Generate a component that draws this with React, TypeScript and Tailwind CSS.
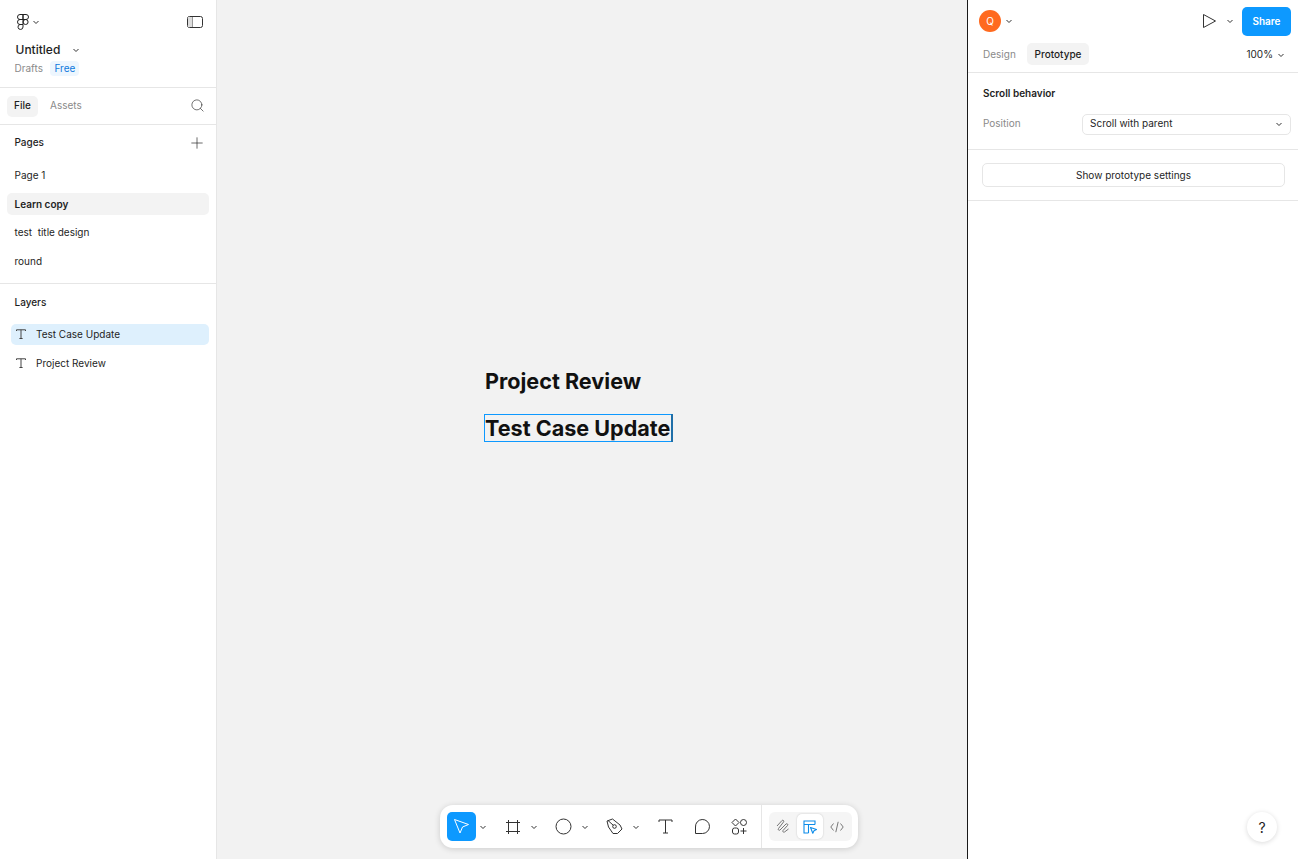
import { Plus, Search } from "lucide-react";

function Caret({ className = "text-[#333]" }: { className?: string }) {
  return (
    <svg width="8" height="8" viewBox="0 0 8 8" fill="none" className={className}>
      <path d="M1.5 3l2.5 2.5L6.5 3" stroke="currentColor" strokeWidth="1" />
    </svg>
  );
}

function FigmaLogo() {
  return (
    <svg width="12" height="16" viewBox="0 0 12 16" fill="none" stroke="#222" strokeWidth="1">
      <path d="M6 .5H3a2.5 2.5 0 0 0 0 5h3zM6 .5h3a2.5 2.5 0 0 1 0 5H6zM6 5.5H3a2.5 2.5 0 0 0 0 5h3z" />
      <circle cx="8.6" cy="8" r="2.5" />
      <path d="M6 10.5H3a2.5 2.5 0 1 0 3 2.5z" />
    </svg>
  );
}

function TextIcon() {
  return (
    <svg width="10" height="10" viewBox="0 0 10 10" fill="none" stroke="#444" strokeWidth="1" className="mb-[2px]">
      <path d="M.5 2V.8h9V2M5 .8v8.7M3.400 9.500h3.200" />
    </svg>
  );
}

function PageRow({ label, className = "" }: { label: string; className?: string }) {
  return (
    <div className={`mx-[7px] flex h-[22px] w-[202px] items-center rounded-[5px] px-[7.5px] ${className}`}>
      <span className="whitespace-pre">{label}</span>
    </div>
  );
}

function LayerRow({ label, active }: { label: string; active?: boolean }) {
  return (
    <div
      className={`ml-[11px] flex h-[21px] w-[198px] items-center gap-[10px] rounded-[5px] pl-[5px] ${
        active ? "bg-[#def0fd]" : ""
      }`}
    >
      <TextIcon />
      <span>{label}</span>
    </div>
  );
}

function LeftPanel() {
  return (
    <aside className="flex h-full w-[217px] shrink-0 flex-col border-r border-[#e6e6e6] bg-white">
      <div className="h-[88px] shrink-0 border-b border-[#e6e6e6] pl-[14.5px] pr-[13px] pt-[13px]">
        <div className="flex h-[17px] items-center justify-between">
          <div className="flex items-center gap-[3px] pl-[2px]">
            <FigmaLogo />
            <Caret />
          </div>
          <svg width="16" height="12" viewBox="0 0 16 12" fill="none" stroke="#333" strokeWidth="1">
            <rect x=".5" y=".5" width="15" height="11" rx="2" />
            <path d="M5 .5v11" />
            <path d="M1 1h4v10H1z" fill="#ddd" stroke="none" />
          </svg>
        </div>
        <div className="mt-[12px] flex h-[16px] items-center text-[12px] font-medium leading-[16px] text-[#1e1e1e]">
          <span className="w-[57px] pl-[1px]">Untitled</span>
          <Caret />
        </div>
        <div className="mt-[2px] flex h-[17px] items-center">
          <span className="text-[#8a8a8a]">Drafts</span>
          <span className="ml-[7.5px] flex h-[15px] items-center rounded-[4px] bg-[#edf6fe] px-[4px] text-[#0d79dd]">
            Free
          </span>
        </div>
      </div>
      <div className="flex h-[37px] shrink-0 items-center border-b border-[#e6e6e6] pl-[7px] pr-[11px]">
        <span className="flex h-[21px] w-[31px] items-center justify-center rounded-[5px] bg-[#f3f3f3] pb-px font-medium">
          File
        </span>
        <span className="ml-[12px] pb-[2px] text-[#8a8a8a]">Assets</span>
        <Search size={15} strokeWidth={1.1} className="mb-px ml-auto text-[#333]" />
      </div>
      <div className="h-[159px] shrink-0 border-b border-[#e6e6e6]">
        <div className="flex h-[36px] items-center justify-between pb-px pl-[14.5px] pr-[10px] font-medium">
          <span className="pb-px">Pages</span>
          <Plus size={18} strokeWidth={0.9} className="text-[#222]" />
        </div>
        <div className="mt-[3.5px] flex flex-col gap-[6.5px]">
          <PageRow label="Page 1" />
          <PageRow label="Learn copy" className="bg-[#f3f3f3] font-semibold" />
          <PageRow label="test  title design" className="-mt-[0.5px] mb-[0.5px]" />
          <PageRow label="round" />
        </div>
      </div>
      <div className="flex h-[37px] shrink-0 items-center pl-[14.5px] font-medium">Layers</div>
      <div className="mt-[3px] flex flex-col gap-[8px]">
        <LayerRow label="Test Case Update" active />
        <LayerRow label="Project Review" />
      </div>
    </aside>
  );
}

function ToolSlot({ children, caret }: { children: React.ReactNode; caret?: boolean }) {
  return (
    <div className="flex h-[29px] items-center gap-[3px]">
      <div className="flex h-[29px] w-[29px] items-center justify-center">{children}</div>
      {caret && <Caret />}
    </div>
  );
}

function Toolbar() {
  return (
    <div className="absolute bottom-[11px] left-[223px] flex h-[43px] w-[418px] items-center rounded-[13px] bg-white pl-[7px] shadow-[0_1px_6px_rgba(0,0,0,0.16)]">
      <div className="flex h-[29px] items-center gap-[3px]">
        <div className="flex h-[29px] w-[29px] items-center justify-center rounded-[5px] bg-[#0d99ff]">
          <svg width="17" height="17" viewBox="0 0 17 17" fill="none" stroke="white" strokeWidth="1">
            <path d="M1.500 1.500l14 5-6 2.500-2.500 6z" strokeLinejoin="round" />
          </svg>
        </div>
        <Caret />
      </div>
      <div className="ml-[11px] flex items-center gap-[11px]">
        <ToolSlot caret>
          <svg width="16" height="16" viewBox="0 0 16 16" fill="none" stroke="#333" strokeWidth="1">
            <path d="M3.500 1v14M12.500 1v14M1 3.500h14M1 12.500h14" />
          </svg>
        </ToolSlot>
        <ToolSlot caret>
          <svg width="17" height="17" viewBox="0 0 17 17" fill="none" stroke="#333" strokeWidth="1">
            <circle cx="8.500" cy="8.500" r="7.500" />
          </svg>
        </ToolSlot>
        <ToolSlot caret>
          <svg width="17" height="17" viewBox="0 0 17 17" fill="none" stroke="#333" strokeWidth="1">
            <path d="M1 3L6.500 1l7.500 6 2 4-4.500 4.500-4.500 0L2.500 9z" strokeLinejoin="round" />
            <circle cx="8.500" cy="8.500" r="1.800" />
            <path d="M2 2.500l5.300 4.800" />
          </svg>
        </ToolSlot>
      </div>
      <div className="ml-[11px] flex items-center gap-[8px]">
        <ToolSlot>
          <svg width="15" height="15" viewBox="0 0 15 15" fill="none" stroke="#333" strokeWidth="1">
            <path d="M1 3V1h13v2M7.500 1v13M5 14h5" />
          </svg>
        </ToolSlot>
        <ToolSlot>
          <svg width="17" height="17" viewBox="0 0 17 17" fill="none" stroke="#333" strokeWidth="1">
            <path d="M1.500 15.500V9a7 7 0 1 1 7 6.500z" strokeLinejoin="round" />
          </svg>
        </ToolSlot>
        <ToolSlot>
          <svg width="17" height="17" viewBox="0 0 17 17" fill="none" stroke="#333" strokeWidth="1">
            <path d="M4.500 1l3.500 3.500-3.500 3.500L1 4.500z" />
            <circle cx="12.500" cy="4.500" r="3" />
            <rect x="1.500" y="10" width="6" height="6" rx="2" />
            <path d="M12.500 10v6M9.500 13h6" />
          </svg>
        </ToolSlot>
      </div>
      <div className="ml-[6.5px] h-full w-px bg-[#e6e6e6]" />
      <div className="ml-[7px] flex h-[29px] w-[83px] items-center rounded-[6px] bg-[#f5f5f5] pl-[1px]">
        <div className="flex h-[25px] w-[27px] items-center justify-center">
          <svg width="15" height="15" viewBox="0 0 15 15" fill="none" stroke="#777" strokeWidth="1">
            <path d="M1 7l5-5.500c1-1 2.500.5 1.500 1.500L2.500 9.500c-1 1 .5 2.500 1.500 1.500l6-6c1-1 2.500.5 1.500 1.500l-4.500 5c-1 1 .5 2 1.500 1.500l4-3" />
          </svg>
        </div>
        <div className="flex h-[25px] w-[26px] items-center justify-center rounded-[5px] bg-white shadow-[0_0_2px_rgba(0,0,0,0.2)]">
          <svg width="14" height="14" viewBox="0 0 14 14" fill="none" stroke="#0d8ce9" strokeWidth="1.100">
            <path d="M5.500 13H1V1h11v3.500M1 4.500h11M5.500 4.500V13" />
            <path d="M7.500 7.500l6 2-2.500 1.200-1.200 2.500z" strokeLinejoin="round" />
          </svg>
        </div>
        <div className="flex h-[25px] w-[28px] items-center justify-center">
          <svg width="14" height="12" viewBox="0 0 14 12" fill="none" stroke="#777" strokeWidth="1">
            <path d="M3.500 2.500L.8 6l2.700 3.500M10.500 2.500L13.200 6l-2.700 3.500M8.200 .8L5.800 11.200" />
          </svg>
        </div>
      </div>
    </div>
  );
}

function Canvas() {
  return (
    <main className="relative h-full w-[750px] shrink-0 bg-[#f2f2f2]">
      <div className="absolute left-[268px] top-[367px] text-[21.6px] font-bold leading-[28px] text-[#111]">
        Project Review
      </div>
      <div className="absolute left-[267px] top-[414px] h-[28px] w-[189px] border border-[#0d99ff] text-[21.6px] font-bold leading-[26px] text-[#111]">
        <span className="whitespace-nowrap">Test Case Update</span>
        <div className="absolute right-[-1px] top-[-1px] h-[28px] w-[2px] bg-[#1f6fa8]" />
      </div>
      <Toolbar />
    </main>
  );
}

function RightPanel() {
  return (
    <aside className="relative flex h-full w-[331px] shrink-0 flex-col border-l border-[#1a1a1a] bg-white">
      <div className="flex h-[43px] shrink-0 items-start pl-[11px] pr-[7px] pt-[7px]">
        <div className="mt-[3px] flex h-[22px] items-center gap-[4px]">
          <div className="flex h-[22px] w-[22px] items-center justify-center rounded-full bg-[#ff6a1f] text-white">
            Q
          </div>
          <Caret />
        </div>
        <svg width="16" height="16" viewBox="0 0 16 16" fill="none" stroke="#333" strokeWidth="1" className="ml-auto mt-[6px]">
          <path d="M2.500 1.500l12 6.500-12 6.500z" strokeLinejoin="round" />
        </svg>
        <Caret className="ml-[9px] mt-[10px] text-[#333]" />
        <div className="ml-[8px] flex h-[29px] w-[49px] items-center justify-center rounded-[5px] bg-[#0d99ff] font-semibold text-white">
          Share
        </div>
      </div>
      <div className="flex h-[30px] shrink-0 items-start border-b border-[#e6e6e6] pl-[15px] pr-[13px]">
        <span className="flex h-[23px] w-[44px] items-center text-[#8a8a8a]">Design</span>
        <span className="flex h-[22px] w-[62px] items-center justify-center rounded-[5px] bg-[#f3f3f3] pt-px font-medium">
          Prototype
        </span>
        <span className="ml-auto flex h-[23px] items-center gap-[4px]">
          100%
          <Caret />
        </span>
      </div>
      <div className="h-[77px] shrink-0 border-b border-[#e6e6e6] pl-[15px] pr-[7px]">
        <div className="flex h-[41px] items-center font-semibold">Scroll behavior</div>
        <div className="-mt-px flex h-[22px] items-center">
          <span className="w-[99px] pb-[2px] text-[#8a8a8a]">Position</span>
          <div className="flex h-[21px] w-[209px] items-center justify-between rounded-[5px] border border-[#e6e6e6] pb-px pl-[7px] pr-[7px]">
            <span className="pb-px">Scroll with parent</span>
            <Caret />
          </div>
        </div>
      </div>
      <div className="flex h-[51px] shrink-0 items-center border-b border-[#e6e6e6] pl-[14px]">
        <div className="flex h-[24px] w-[303px] items-center justify-center rounded-[5px] border border-[#e6e6e6] pt-px">
          Show prototype settings
        </div>
      </div>
      <div className="absolute bottom-[17px] right-[21px] flex h-[30px] w-[30px] items-center justify-center rounded-full bg-white text-[14px] shadow-[0_1px_5px_rgba(0,0,0,0.15)]">
        ?
      </div>
    </aside>
  );
}

export default function App() {
  return (
    <div className="flex h-[859px] w-[1298px] overflow-hidden font-['Inter',sans-serif] text-[10px] leading-[13px] text-[#1e1e1e]">
      <LeftPanel />
      <Canvas />
      <RightPanel />
    </div>
  );
}
